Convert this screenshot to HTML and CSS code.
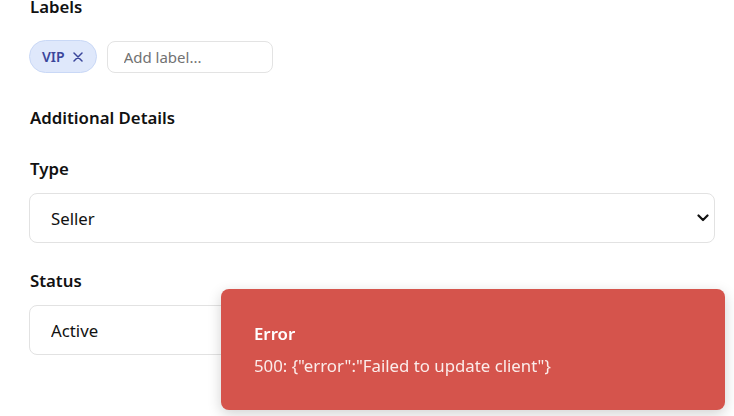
FILE: index.html
```html
<!DOCTYPE html>
<html>
<head>
<meta charset="utf-8">
<link rel="stylesheet" href="styles.css">
</head>
<body>
<main class="form">
  <div class="field field-first">
    <label class="label">Labels</label>
    <div class="chips">
      <span class="chip">VIP
        <svg class="chip-x" width="10" height="10" viewBox="0 0 10 10"><path d="M1 1L9 9M9 1L1 9" stroke="currentColor" stroke-width="1.5" stroke-linecap="round"/></svg>
      </span>
      <input class="chip-input" type="text" placeholder="Add label...">
    </div>
  </div>
  <h3 class="section-title">Additional Details</h3>
  <div class="field">
    <label class="label">Type</label>
    <div class="select-wrap">
      <select class="select"><option>Seller</option></select>
      <svg class="chevron" width="12" height="8" viewBox="0 0 12 8"><path d="M1.5 1.5L6 6L10.5 1.5" fill="none" stroke="#111" stroke-width="2.2" stroke-linecap="round" stroke-linejoin="round"/></svg>
    </div>
  </div>
  <div class="field">
    <label class="label">Status</label>
    <div class="select-wrap">
      <select class="select"><option>Active</option></select>
      <svg class="chevron" width="12" height="8" viewBox="0 0 12 8"><path d="M1.5 1.5L6 6L10.5 1.5" fill="none" stroke="#111" stroke-width="2.2" stroke-linecap="round" stroke-linejoin="round"/></svg>
    </div>
  </div>
</main>
<div class="toast">
  <div class="toast-title">Error</div>
  <div class="toast-msg">500: {"error":"Failed to update client"}</div>
</div>
</body>
</html>
```
FILE: styles.css
```css
* { box-sizing: border-box; }
html, body { margin: 0; padding: 0; background: #fff; overflow: hidden; }
body { font-family: "Noto Sans", "Open Sans", sans-serif; color: #111; width: 734px; height: 416px; }
.form { padding: 0 19px 0 29px; display: flex; flex-direction: column; }
.field { display: flex; flex-direction: column; margin-bottom: 26px; }
.field-first { margin-top: -5px; margin-bottom: 33px; }
.label { font-size: 16.8px; font-weight: 600; line-height: 24px; margin-bottom: 12px; padding-left: 1px; }
.field-first .label { margin-bottom: 21px; }
.chips { display: flex; align-items: center; gap: 10px; }
.chip { display: inline-flex; align-items: center; gap: 8px; height: 33px; padding: 0 13px 0 12px; border-radius: 999px; background: #dfe8fb; border: 1px solid #c9d8f6; color: #3a469b; font-size: 14px; font-weight: 600; }
.chip-x { display: block; }
.chip-input { width: 166px; height: 32px; border: 1px solid #e3e3e3; border-radius: 8px; padding: 0 16px; font-family: inherit; font-size: 15px; color: #333; outline: none; }
.chip-input::placeholder { color: #727272; }
.section-title { margin: 0 0 27px 1px; font-size: 16.8px; font-weight: 600; line-height: 24px; }
.select-wrap { position: relative; }
.select { -webkit-appearance: none; appearance: none; width: 100%; height: 50px; border: 1px solid #e2e2e2; border-radius: 8px; background: #fff; padding: 0 21px; font-family: inherit; font-size: 16.8px; color: #111; outline: none; }
.chevron { position: absolute; right: 6px; top: 21px; pointer-events: none; }
.toast { position: fixed; left: 221px; top: 289px; width: 504px; height: 121px; background: #d5544c; border-radius: 8px; box-shadow: 0 4px 14px rgba(0,0,0,0.18); padding: 33px 33px; color: #fff; }
.toast-title { font-size: 16.8px; font-weight: 600; line-height: 24px; margin-bottom: 8px; }
.toast-msg { font-size: 16.8px; line-height: 24px; color: #fbecea; }
```
